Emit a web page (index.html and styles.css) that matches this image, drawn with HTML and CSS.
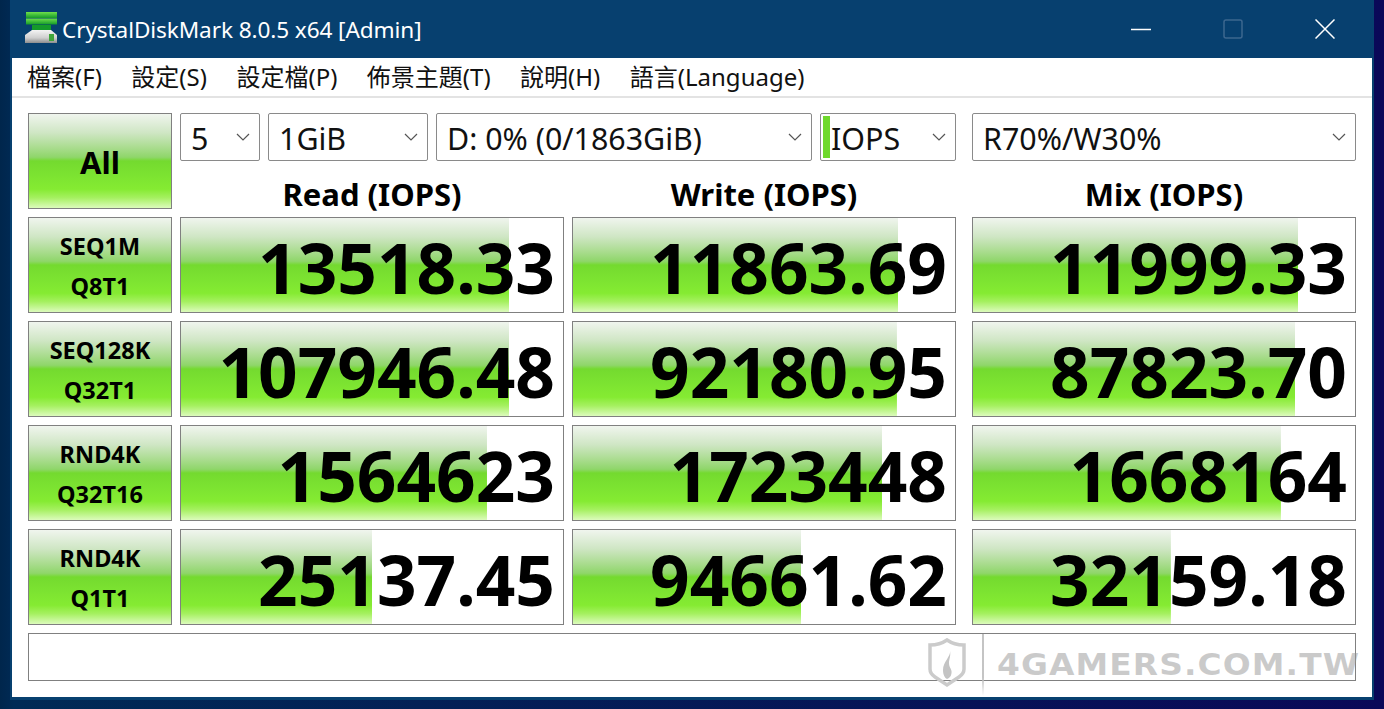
FILE: index.html
```html
<!DOCTYPE html>
<html lang="zh-Hant">
<head>
<meta charset="utf-8">
<title>CrystalDiskMark 8.0.5 x64 [Admin]</title>
<link rel="stylesheet" href="styles.css">
</head>
<body>
<div class="window">
  <header class="titlebar">
    <svg class="app-icon" viewBox="0 0 32 32" aria-hidden="true">
      <defs>
        <linearGradient id="gr" x1="0" y1="0" x2="0" y2="1"><stop offset="0" stop-color="#6fe04a"/><stop offset="1" stop-color="#149a2a"/></linearGradient>
        <linearGradient id="dr" x1="0" y1="0" x2="0" y2="1"><stop offset="0" stop-color="#f4f4f4"/><stop offset=".6" stop-color="#cfcfcf"/><stop offset="1" stop-color="#8d8d8d"/></linearGradient>
      </defs>
      <rect x="1" y="0" width="31" height="6" fill="url(#gr)"/>
      <rect x="1" y="6.500" width="31" height="6" fill="url(#gr)"/>
      <path d="M7 13h19v5H7z" fill="#149a2a"/>
      <path d="M7 18h19l6 5v8H0v-8z" fill="url(#dr)"/>
      <rect x="24" y="22" width="5" height="7" fill="#3fa53a"/>
    </svg>
    <span class="title">CrystalDiskMark 8.0.5 x64 [Admin]</span>
    <div class="controls">
      <span class="control"><svg viewBox="0 0 20 20" width="20" height="20"><path d="M0 10.500h20" stroke="#fff" stroke-width="1.500"/></svg></span>
      <span class="control"><svg viewBox="0 0 20 20" width="20" height="20"><rect x="1" y="1" width="18" height="18" rx="2" fill="none" stroke="#3d678f" stroke-width="1.500"/></svg></span>
      <span class="control"><svg viewBox="0 0 20 20" width="20" height="20"><path d="M.5.500l19 19M19.500.500l-19 19" stroke="#fff" stroke-width="1.500"/></svg></span>
    </div>
  </header>
  <div class="client">
    <nav class="menu">
      <span>檔案(F)</span><span>設定(S)</span><span>設定檔(P)</span><span>佈景主題(T)</span><span>說明(H)</span><span>語言(Language)</span>
    </nav>
    <main class="board">
      <div class="cell label all">All</div>
      <div class="selects">
        <div class="select w-80"><span>5</span><svg class="chev" viewBox="0 0 14 8"><path d="M1 1l6 6 6-6" fill="none" stroke="#555" stroke-width="1.200"/></svg></div>
        <div class="select w-160"><span>1GiB</span><svg class="chev" viewBox="0 0 14 8"><path d="M1 1l6 6 6-6" fill="none" stroke="#555" stroke-width="1.200"/></svg></div>
        <div class="select w-376"><span>D: 0% (0/1863GiB)</span><svg class="chev" viewBox="0 0 14 8"><path d="M1 1l6 6 6-6" fill="none" stroke="#555" stroke-width="1.200"/></svg></div>
        <div class="select w-136 unit"><span>IOPS</span><svg class="chev" viewBox="0 0 14 8"><path d="M1 1l6 6 6-6" fill="none" stroke="#555" stroke-width="1.200"/></svg></div>
        <div class="select w-384 mix-col"><span>R70%/W30%</span><svg class="chev" viewBox="0 0 14 8"><path d="M1 1l6 6 6-6" fill="none" stroke="#555" stroke-width="1.200"/></svg></div>
      </div>
      <div class="head">Read (IOPS)</div>
      <div class="head">Write (IOPS)</div>
      <div class="head mix-col">Mix (IOPS)</div>

      <div class="cell label"><span>SEQ1M</span><span>Q8T1</span></div>
      <div class="cell value" style="--w:85.9%">13518.33</div>
      <div class="cell value" style="--w:85.1%">11863.69</div>
      <div class="cell value mix-col" style="--w:85.1%">11999.33</div>

      <div class="cell label"><span>SEQ128K</span><span>Q32T1</span></div>
      <div class="cell value" style="--w:85.9%">107946.48</div>
      <div class="cell value" style="--w:84.8%">92180.95</div>
      <div class="cell value mix-col" style="--w:84.3%">87823.70</div>

      <div class="cell label"><span>RND4K</span><span>Q32T16</span></div>
      <div class="cell value" style="--w:80.1%">1564623</div>
      <div class="cell value" style="--w:80.9%">1723448</div>
      <div class="cell value mix-col" style="--w:80.6%">1668164</div>

      <div class="cell label"><span>RND4K</span><span>Q1T1</span></div>
      <div class="cell value" style="--w:50%">25137.45</div>
      <div class="cell value" style="--w:59.7%">94661.62</div>
      <div class="cell value mix-col" style="--w:51.8%">32159.18</div>

      <div class="message"></div>
    </main>
  </div>
</div>
<div class="watermark">
  <svg class="wm-shield" viewBox="0 0 38 50" aria-hidden="true">
    <path d="M19 2C14 5.500 8 7 2 7v24c0 4 2 6 5 8l12 8 12-8c3-2 5-4 5-8V7C30 7 24 5.500 19 2z" fill="none" stroke="#cbcbcb" stroke-width="3.500"/>
    <path d="M22 13c1 5-7 11-7 19 0 5 2 8 4 9 3-1 5-4 4.500-8-.5-3-2.500-4-2.500-8 0-4 2-7 1-12z" fill="#c4c4c4"/>
  </svg>
  <span class="wm-divider"></span>
  <span class="wm-text">4GAMERS.COM.TW</span>
</div>
</body>
</html>
```
FILE: styles.css
```css
* { box-sizing: border-box; }

html, body {
  margin: 0;
  height: 100%;
  overflow: hidden;
}

body {
  position: relative;
  padding: 0 10px;
  background: linear-gradient(90deg, #00264c 0, #002a55 1%, #0a0858 100%);
  font-family: "Noto Sans", "Open Sans", "Noto Sans CJK TC", sans-serif;
  color: #000;
}

.window {
  height: 700px;
  padding: 0 2px 3px;
  background: #07406f;
  display: flex;
  flex-direction: column;
}

.titlebar {
  height: 58px;
  flex: none;
  display: flex;
  align-items: center;
  color: #fff;
  padding-left: 13px;
}

.app-icon {
  width: 32px;
  height: 32px;
  margin-top: -2px;
  flex: none;
}

.title {
  margin-left: 5px;
  font-size: 22.600px;
  letter-spacing: -0.100px;
  margin-top: 1px;
}

.controls {
  display: flex;
  margin: -1px 1px 0 auto;
}

.control {
  width: 92px;
  display: flex;
  justify-content: center;
}

.client {
  flex: 1;
  background: #fff;
  display: flex;
  flex-direction: column;
}

.menu {
  height: 40px;
  flex: none;
  border-bottom: 2px solid #e3e3e3;
  display: flex;
  align-items: center;
  gap: 29.500px;
  padding: 0 0 4px 15px;
  font-family: "Noto Sans", "Noto Sans CJK TC", sans-serif;
  font-size: 24px;
  color: #111;
}

.board {
  padding: 15px 16px 0;
  display: grid;
  grid-template-columns: 144px 384px 384px 392px;
  grid-template-rows: 48px 48px repeat(4, 104px) 56px;
  column-gap: 8px;
  row-gap: 0;
}

.board > .cell:not(.all) { margin-top: 8px; height: 96px; }

.cell {
  border: 1px solid #808080;
  background-color: #fff;
  background-image: linear-gradient(180deg,
    #f0f5ee 0%, #cfe6c4 20%, #a9dc8e 36%, #8fd66a 46%, #74da2f 50%, #7ce331 65%, #85eb32 80%, #a5f060 89%, #dcfbbc 100%);
  background-repeat: no-repeat;
}

.label {
  display: flex;
  flex-direction: column;
  align-items: center;
  justify-content: center;
  padding-top: 2px;
  font-weight: 700;
  font-size: 23.500px;
  line-height: 40px;
}

.all {
  grid-row: 1 / span 2;
  font-size: 31px;
}

.selects {
  grid-column: 2 / -1;
  display: flex;
  gap: 8px;
}

.select {
  height: 48px;
  border: 1px solid #8a8a8a;
  border-radius: 2px;
  background: #fff;
  display: flex;
  align-items: center;
  justify-content: space-between;
  padding: 3px 9px 0 10px;
  font-size: 30.400px;
  color: #111;
}

.w-80 { width: 80px; }
.w-160 { width: 160px; }
.w-376 { width: 376px; }
.w-136 { width: 136px; }
.w-384 { width: 384px; }

.unit {
  position: relative;
}

.unit::before {
  content: "";
  position: absolute;
  left: 2px;
  top: 2px;
  bottom: 2px;
  width: 7px;
  background: #6fd92c;
}

.chev {
  width: 14px;
  height: 8px;
  flex: none;
  margin-top: -3px;
}

.mix-col { margin-left: 8px; }

.head {
  grid-row: 2;
  display: flex;
  align-items: center;
  justify-content: center;
  padding-top: 18px;
  height: 48px;
  font-weight: 700;
  font-size: 31px;
  line-height: 1;
}

.value {
  display: flex;
  align-items: center;
  justify-content: flex-end;
  padding: 6px 8px 0 0;
  font-weight: 700;
  font-size: 69.300px;
  line-height: 1;
  background-size: var(--w) 100%;
}

.message {
  grid-column: 1 / -1;
  margin-top: 8px;
  height: 48px;
  border: 1px solid #808080;
}

.watermark {
  position: absolute;
  left: 928px;
  top: 634px;
  display: flex;
  align-items: center;
  pointer-events: none;
}

.wm-shield {
  width: 38px;
  height: 50px;
  margin-top: -4px;
}

.wm-divider {
  width: 2px;
  height: 62px;
  margin-left: 16px;
  background: linear-gradient(180deg, rgba(190,190,190,.9) 70%, rgba(190,190,190,0));
}

.wm-text {
  margin-left: 13px;
  font-family: "DejaVu Sans", sans-serif;
  font-weight: 700;
  font-size: 30px;
  letter-spacing: 1px;
  line-height: 1;
  white-space: nowrap;
  color: rgba(150, 150, 150, .5);
  transform: scaleX(1.095);
  transform-origin: left center;
}
```
